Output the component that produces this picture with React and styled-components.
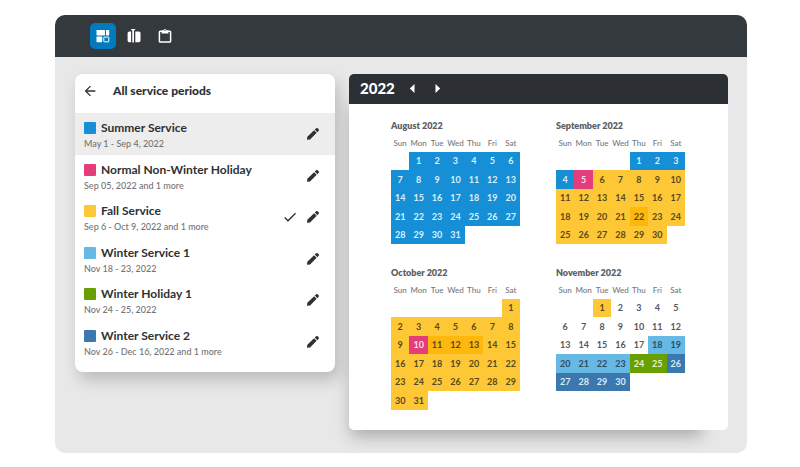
import React, { useState } from "react";
import styled, { createGlobalStyle } from "styled-components";

const colors = {
  blue: "#168fd6",
  pink: "#e43d7b",
  yellow: "#fec736",
  amber: "#fdb70d",
  sky: "#66b8e5",
  green: "#68a000",
  navy: "#3b78ae",
};

const periods = [
  { name: "Summer Service", dates: "May 1 - Sep 4, 2022", color: "blue" },
  { name: "Normal Non-Winter Holiday", dates: "Sep 05, 2022 and 1 more", color: "pink" },
  { name: "Fall Service", dates: "Sep 6 - Oct 9, 2022 and 1 more", color: "yellow", checked: true },
  { name: "Winter Service 1", dates: "Nov 18 - 23, 2022", color: "sky" },
  { name: "Winter Holiday 1", dates: "Nov 24 - 25, 2022", color: "green" },
  { name: "Winter Service 2", dates: "Nov 26 - Dec 16, 2022 and 1 more", color: "navy" },
];

const weekdays = ["Sun", "Mon", "Tue", "Wed", "Thu", "Fri", "Sat"];

/* Each range is [first day, last day, color]; later ranges win. */
const months = [
  { title: "August 2022", start: 1, days: 31, ranges: [[1, 31, "blue"]] },
  {
    title: "September 2022",
    start: 4,
    days: 30,
    ranges: [[1, 4, "blue"], [5, 5, "pink"], [6, 30, "yellow"], [22, 22, "amber"]],
  },
  {
    title: "October 2022",
    start: 6,
    days: 31,
    ranges: [[1, 31, "yellow"], [10, 10, "pink"], [11, 13, "amber"]],
  },
  {
    title: "November 2022",
    start: 2,
    days: 30,
    ranges: [[1, 1, "yellow"], [18, 23, "sky"], [24, 25, "green"], [26, 30, "navy"]],
  },
];

const dayText = {
  blue: "#dceffa",
  pink: "#fbdfe9",
  green: "#e6f3cf",
  navy: "#dceaf5",
  sky: "#2f4f60",
  yellow: "#57491f",
  amber: "#57491f",
};

function weeksOf({ start, days }) {
  const count = Math.ceil((start + days) / 7);
  return Array.from({ length: count }, (_, week) =>
    weekdays.map((_, i) => {
      const day = week * 7 + i - start + 1;
      return day >= 1 && day <= days ? day : null;
    })
  );
}

function colorOf(ranges, day) {
  const hit = ranges.filter(([from, to]) => day >= from && day <= to).pop();
  return hit ? hit[2] : undefined;
}

const GlobalStyle = createGlobalStyle`
  *, *::before, *::after { box-sizing: border-box; }
  body {
    margin: 0;
    background: #fff;
    color: #2d3135;
    font-family: Lato, "Open Sans", sans-serif;
  }
  button { font: inherit; color: inherit; }
`;

const Page = styled.div`
  padding: 15px 53px 14px 55px;
`;

const AppFrame = styled.div`
  background: #e8e8e8;
  border-radius: 10px;
  overflow: hidden;
`;

const TopBar = styled.nav`
  display: flex;
  align-items: center;
  gap: 5px;
  height: 42px;
  padding: 0 35px;
  background: #33393d;
`;

const ToolButton = styled.button`
  display: grid;
  place-items: center;
  width: 26px;
  height: 26px;
  padding: 0;
  border: 0;
  border-radius: 5px;
  color: #fff;
  background: ${(p) => (p.$active ? "#007bbd" : "transparent")};
  cursor: pointer;
`;

const Content = styled.main`
  display: grid;
  grid-template-columns: minmax(0, 260fr) minmax(0, 379fr);
  align-items: start;
  gap: 14px;
  padding: 17px 19px 23px 20px;
`;

const PeriodsCard = styled.section`
  padding-bottom: 10px;
  background: #fff;
  border-radius: 8px;
  box-shadow: 4px 8px 16px rgba(0, 0, 0, 0.2);
`;

const CardHeader = styled.header`
  display: flex;
  align-items: center;
  gap: 15px;
  height: 39px;
  padding: 0 7px 6px;
`;

const CardTitle = styled.h1`
  margin: 0;
  font-size: 12px;
  line-height: 16px;
  font-weight: 900;
`;

const IconButton = styled.button`
  display: grid;
  place-items: center;
  width: 16px;
  height: 16px;
  padding: 0;
  border: 0;
  background: none;
  color: #2d3135;
  cursor: pointer;
`;

const PeriodList = styled.ul`
  margin: 0;
  padding: 0;
  list-style: none;
`;

const PeriodRow = styled.li`
  display: flex;
  align-items: center;
  gap: 7px;
  height: 42px;
  padding: 0 14px 0 9px;
  background: ${(p) => (p.$selected ? "#ededed" : "transparent")};
  &:nth-child(even) { height: 41px; }
`;

const PeriodText = styled.div`
  flex: 1;
  min-width: 0;
  padding-top: 4px;
`;

const PeriodName = styled.div`
  display: flex;
  align-items: center;
  gap: 5px;
  font-size: 12px;
  line-height: 16px;
  font-weight: 700;
  white-space: nowrap;
`;

const Swatch = styled.span`
  width: 12px;
  height: 12px;
  border-radius: 1px;
  background: ${(p) => colors[p.$color]};
`;

const PeriodDates = styled.div`
  font-size: 9px;
  line-height: 16px;
  font-weight: 500;
  color: #747474;
  white-space: nowrap;
`;

const CalendarPanel = styled.section`
  background: #fff;
  border-radius: 5px;
  box-shadow: -12px 20px 16px -14px rgba(0, 0, 0, 0.28);
`;

const YearBar = styled.header`
  display: flex;
  align-items: center;
  gap: 9px;
  height: 30px;
  padding: 0 11px 2px;
  border-radius: 5px 5px 0 0;
  background: #2c3034;
  color: #fff;
`;

const Year = styled.h2`
  margin: 0;
  font-size: 15px;
  line-height: 20px;
  font-weight: 900;
`;

const YearButton = styled(IconButton)`
  color: #fff;
`;

const Months = styled.div`
  display: grid;
  grid-template-columns: repeat(2, 129px);
  justify-content: center;
  align-items: start;
  gap: 21px 36px;
  padding: 14px 1px 20px 0;
`;

const Month = styled.table`
  width: 100%;
  table-layout: fixed;
  border-collapse: collapse;
  text-align: center;
  caption {
    font-size: 9px;
    line-height: 16px;
    font-weight: 800;
    text-align: left;
    color: #5c6063;
  }
`;

const Weekday = styled.th`
  height: 18px;
  padding: 0;
  font-size: 8px;
  line-height: 16px;
  font-weight: 500;
  color: #74787b;
`;

const Week = styled.tr`
  height: 18px;
  &:nth-child(even) { height: 19px; }
`;

const Day = styled.td`
  padding: 0;
  font-size: 9px;
  line-height: 16px;
  font-weight: 700;
  background: ${(p) => (p.$color ? colors[p.$color] : "transparent")};
  color: ${(p) => dayText[p.$color] || "#55595c"};
`;

const BoardIcon = () => (
  <svg width="14" height="14" viewBox="0 0 14 14" fill="currentColor" aria-hidden="true">
    <rect x="0.5" y="1" width="8.5" height="5.4" rx="0.6" />
    <rect x="10" y="1" width="3.2" height="5.4" rx="0.6" />
    <rect x="0.5" y="7.6" width="5.7" height="5.6" rx="0.6" />
    <rect x="7.8" y="8.1" width="5" height="4.7" rx="0.4" fill="none" stroke="currentColor" strokeWidth="1" />
  </svg>
);

const CompareIcon = () => (
  <svg width="14" height="16" viewBox="0 0 14 16" fill="currentColor" aria-hidden="true">
    <path d="M4.1 3.4v10.8H2.2A1.6 1.6 0 0 1 .6 12.6V5a1.6 1.6 0 0 1 1.6-1.6z" />
    <path d="M3.6 1h5L7 2.8v11.8H5.3V2.8z" />
    <path d="M8.3 3.4h3.6A1.6 1.6 0 0 1 13.5 5v7.6a1.6 1.6 0 0 1-1.6 1.6H8.3z" />
  </svg>
);

const ClipboardIcon = () => (
  <svg width="14" height="16" viewBox="0 0 14 16" aria-hidden="true">
    <rect x="1.4" y="3.2" width="11.2" height="10.8" rx="0.8" fill="none" stroke="currentColor" strokeWidth="1.5" />
    <path d="M3.6 2.5h1.7a1.8 1.8 0 0 1 3.4 0h1.7v3H3.6z" fill="currentColor" />
    <circle cx="7" cy="2.6" r="0.6" fill="#33393d" />
  </svg>
);

const BackIcon = () => (
  <svg width="16" height="16" viewBox="0 0 24 24" fill="currentColor" aria-hidden="true">
    <path d="M20 11H7.83l5.59-5.59L12 4l-8 8 8 8 1.41-1.41L7.83 13H20v-2z" />
  </svg>
);

const PencilIcon = () => (
  <svg width="16" height="16" viewBox="0 0 24 24" fill="currentColor" aria-hidden="true">
    <path d="M3 20.8l.5-4.6L13.600 6.400l3.900 3.900L7.600 20.300z" />
    <path d="M14.700 5.300l2-1.900a1.700 1.700 0 0 1 2.300 0l1.500 1.500a1.700 1.700 0 0 1 0 2.300l-1.900 2z" />
  </svg>
);

const CheckIcon = () => (
  <svg width="16" height="16" viewBox="0 0 24 24" fill="currentColor" role="img" aria-label="Applied">
    <path d="M9 16.170 4.830 12l-1.420 1.410L9 19 21 7l-1.410-1.410z" />
  </svg>
);

const TriangleIcon = ({ direction }) => (
  <svg width="16" height="16" viewBox="0 0 16 16" fill="currentColor" aria-hidden="true">
    <path d={direction === "left" ? "M10.500 4v9L5.800 8.500z" : "M6.500 4v9l4.700-4.500z"} />
  </svg>
);

const tools = [
  { label: "Service board", Icon: BoardIcon },
  { label: "Compare", Icon: CompareIcon },
  { label: "Clipboard", Icon: ClipboardIcon },
];

function MonthTable({ month }) {
  return (
    <Month>
      <caption>{month.title}</caption>
      <thead>
        <tr>
          {weekdays.map((d) => (
            <Weekday key={d} scope="col">{d}</Weekday>
          ))}
        </tr>
      </thead>
      <tbody>
        {weeksOf(month).map((week, w) => (
          <Week key={w}>
            {week.map((day, i) => (
              <Day key={i} $color={day ? colorOf(month.ranges, day) : undefined}>{day}</Day>
            ))}
          </Week>
        ))}
      </tbody>
    </Month>
  );
}

export default function App() {
  const [tool, setTool] = useState(0);
  return (
    <>
      <GlobalStyle />
      <Page>
        <AppFrame>
          <TopBar>
            {tools.map(({ label, Icon }, i) => (
              <ToolButton key={label} aria-label={label} $active={i === tool} onClick={() => setTool(i)}>
                <Icon />
              </ToolButton>
            ))}
          </TopBar>
          <Content>
            <PeriodsCard>
              <CardHeader>
                <IconButton aria-label="Back"><BackIcon /></IconButton>
                <CardTitle>All service periods</CardTitle>
              </CardHeader>
              <PeriodList>
                {periods.map((p, i) => (
                  <PeriodRow key={p.name} $selected={i === 0}>
                    <PeriodText>
                      <PeriodName>
                        <Swatch $color={p.color} />
                        {p.name}
                      </PeriodName>
                      <PeriodDates>{p.dates}</PeriodDates>
                    </PeriodText>
                    {p.checked && <CheckIcon />}
                    <IconButton aria-label={`Edit ${p.name}`}><PencilIcon /></IconButton>
                  </PeriodRow>
                ))}
              </PeriodList>
            </PeriodsCard>
            <CalendarPanel>
              <YearBar>
                <Year>2022</Year>
                <YearButton aria-label="Previous year"><TriangleIcon direction="left" /></YearButton>
                <YearButton aria-label="Next year"><TriangleIcon direction="right" /></YearButton>
              </YearBar>
              <Months>
                {months.map((m) => (
                  <MonthTable key={m.title} month={m} />
                ))}
              </Months>
            </CalendarPanel>
          </Content>
        </AppFrame>
      </Page>
    </>
  );
}
